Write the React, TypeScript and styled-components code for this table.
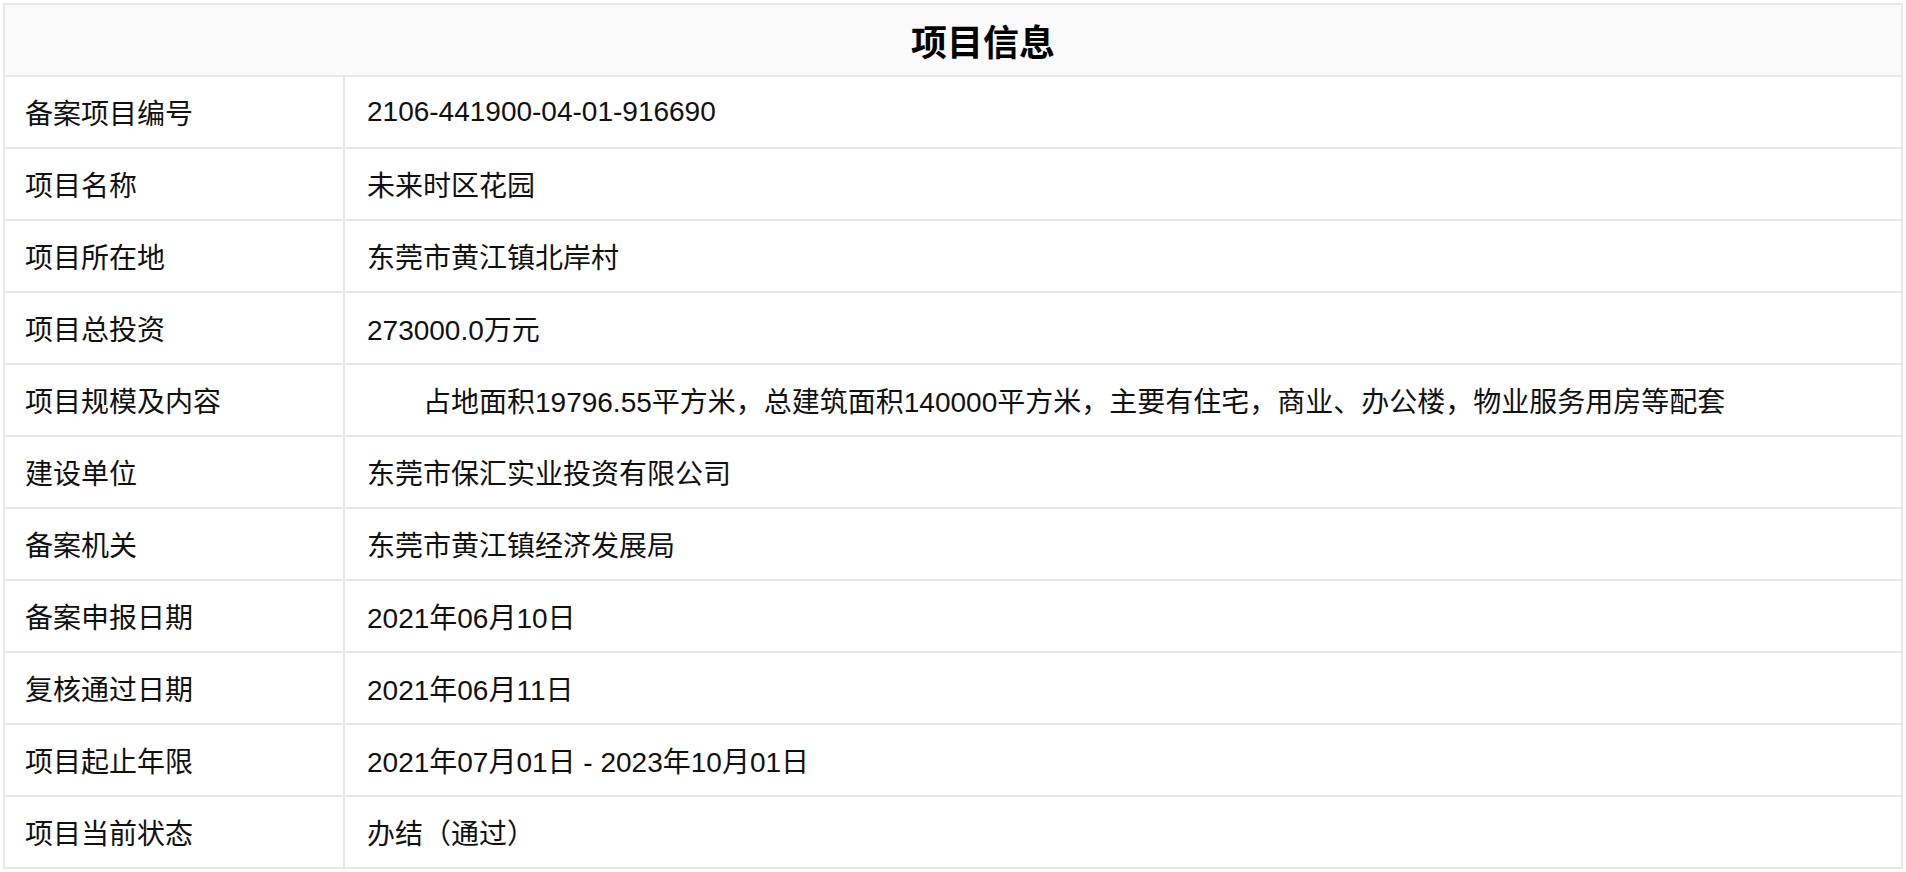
import { Fragment } from 'react'
import styled, { createGlobalStyle } from 'styled-components'

const GlobalStyle = createGlobalStyle`
  html, body {
    margin: 0;
    padding: 0;
    background: #ffffff;
  }
  body {
    font-family: "Liberation Sans", "Noto Sans CJK SC", sans-serif;
    color: #111111;
  }
`

const Page = styled.div`
  padding: 3px 3px 0;
`

const InfoTable = styled.div`
  display: grid;
  grid-template-columns: 340px 1fr;
  border-top: 2px solid #e8e8e8;
  border-left: 2px solid #e8e8e8;
`

const TitleCell = styled.div`
  grid-column: 1 / -1;
  height: 70px;
  display: flex;
  align-items: center;
  justify-content: center;
  padding-left: 60px;
  background: #fafafa;
  border-right: 2px solid #e8e8e8;
  border-bottom: 2px solid #e8e8e8;
  font-size: 36px;
  font-weight: bold;
  color: #000;
`

const Cell = styled.div<{ $label?: boolean }>`
  height: 70px;
  display: flex;
  align-items: center;
  padding-left: ${p => (p.$label ? '20px' : '22px')};
  border-right: 2px solid #e8e8e8;
  border-bottom: 2px solid #e8e8e8;
  font-size: 28px;
  white-space: nowrap;
  overflow: hidden;
`

const Indented = styled.span`
  padding-left: 2em;
`

const rows: { label: string; value: string; indent?: boolean }[] = [
  { label: '备案项目编号', value: '2106-441900-04-01-916690' },
  { label: '项目名称', value: '未来时区花园' },
  { label: '项目所在地', value: '东莞市黄江镇北岸村' },
  { label: '项目总投资', value: '273000.0万元' },
  {
    label: '项目规模及内容',
    value: '占地面积19796.55平方米，总建筑面积140000平方米，主要有住宅，商业、办公楼，物业服务用房等配套',
    indent: true,
  },
  { label: '建设单位', value: '东莞市保汇实业投资有限公司' },
  { label: '备案机关', value: '东莞市黄江镇经济发展局' },
  { label: '备案申报日期', value: '2021年06月10日' },
  { label: '复核通过日期', value: '2021年06月11日' },
  { label: '项目起止年限', value: '2021年07月01日 - 2023年10月01日' },
  { label: '项目当前状态', value: '办结（通过）' },
]

export default function App() {
  return (
    <>
      <GlobalStyle />
      <Page>
        <InfoTable>
          <TitleCell>项目信息</TitleCell>
          {rows.map(r => (
            <Fragment key={r.label}>
              <Cell $label>{r.label}</Cell>
              <Cell>{r.indent ? <Indented>{r.value}</Indented> : r.value}</Cell>
            </Fragment>
          ))}
        </InfoTable>
      </Page>
    </>
  )
}
